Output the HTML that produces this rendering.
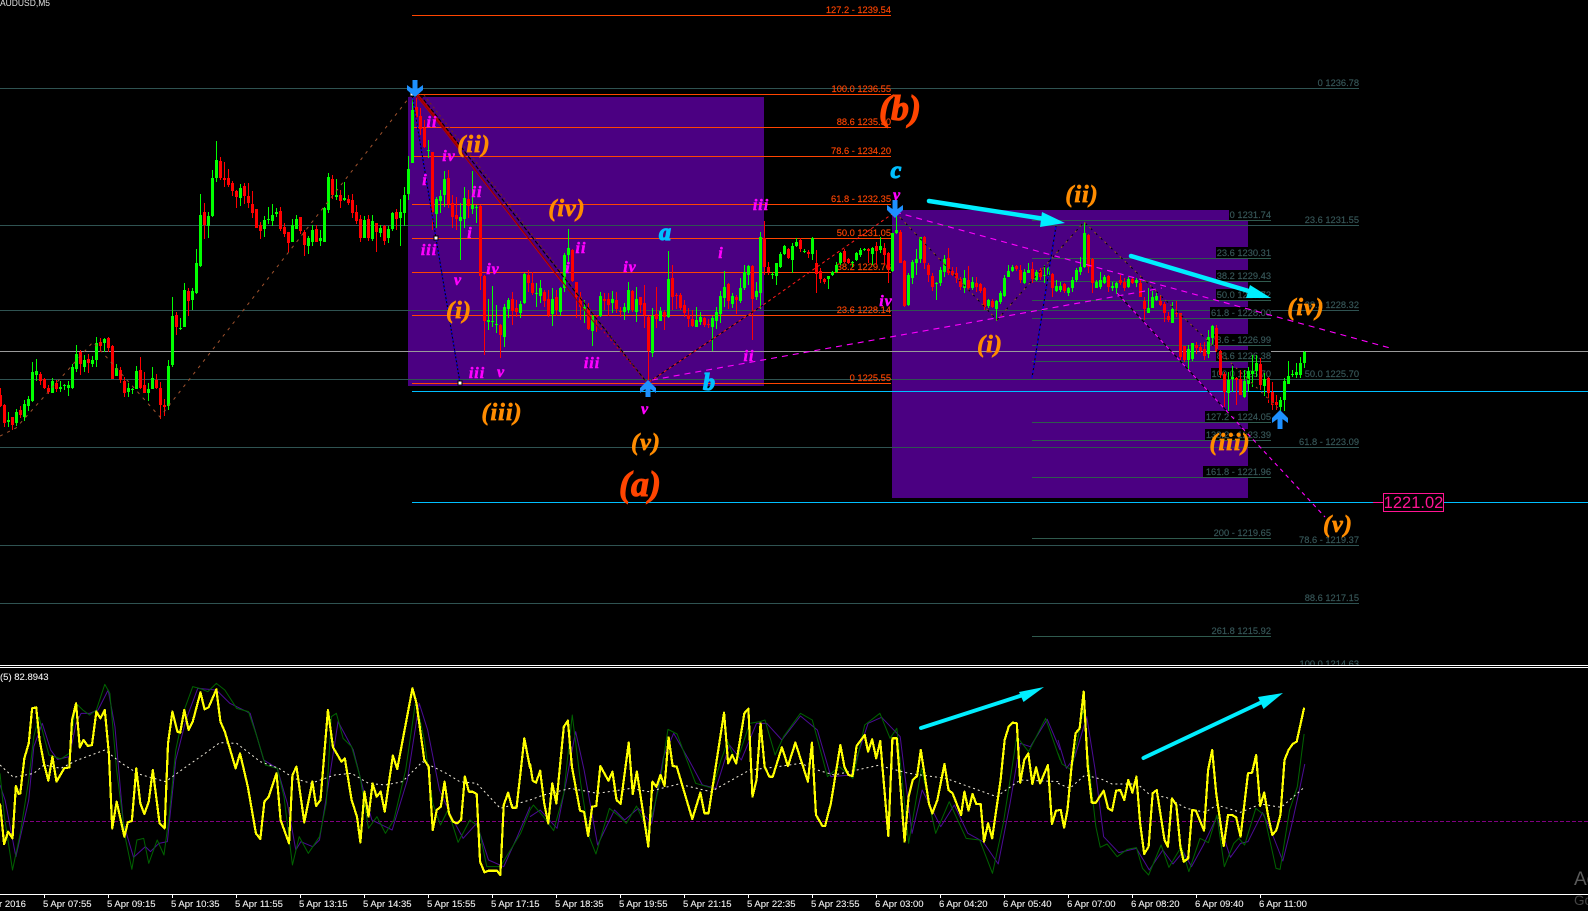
<!DOCTYPE html>
<html><head><meta charset="utf-8"><title>AUDUSD,M5</title>
<style>
html,body{margin:0;padding:0;background:#000;width:1588px;height:911px;overflow:hidden}
svg{display:block}
text{font-family:"Liberation Sans",sans-serif}
.o{fill:#ff4500;font-size:9.3px;text-anchor:end;stroke:#ff4500;stroke-width:.15px}
.s{fill:#38585a;font-size:9.3px;text-anchor:end;stroke:#38585a;stroke-width:.15px}
.t{fill:#f0f0f0;font-size:9.5px;stroke:#f0f0f0;stroke-width:.1px}
.w{font-family:"Liberation Serif",serif;font-weight:bold;font-style:italic;text-anchor:middle}
.m{fill:#ff00ff;font-size:16px;letter-spacing:1px;stroke:#ff00ff;stroke-width:.5px}
.p{fill:#ff8c00;font-size:24px;stroke:#ff8c00;stroke-width:.7px;letter-spacing:1px}
.b{fill:#ff4500;font-size:36px;stroke:#ff4500;stroke-width:1px}
.c{fill:#00bfff;font-size:24px;stroke:#00bfff;stroke-width:1.2px}
.ln{fill:none;vector-effect:non-scaling-stroke;stroke-linejoin:round}
.y{shape-rendering:crispEdges}
</style></head><body>
<svg width="1588" height="911" viewBox="0 0 1588 911" xmlns="http://www.w3.org/2000/svg">
<rect width="1588" height="911" fill="#000"/>
<rect x="408" y="97" width="356" height="289" fill="#4b0082"/>
<rect x="892" y="210" width="356" height="288" fill="#4b0082"/>

<g shape-rendering="crispEdges">
<path d="M0 88.5H1359M0 225.5H1359M0 310.5H1359M0 379.5H1359M0 447.5H1359M0 545.5H1359M0 603.5H1359" stroke="#2f5352" fill="none"/>
<path d="M0 351.5H1588" stroke="#9a9a9a" fill="none"/>
<path d="M412 391.5H1588M412 502.5H1373" stroke="#00bfff" fill="none"/>
<path d="M1444 502.5H1588" stroke="#00bfff" fill="none"/>
<path d="M412 15.5H891M412 94.5H891M412 127.5H891M412 156.5H891M412 204.5H891M412 238.5H891M412 272.5H891M412 315.5H891M412 383.5H891" stroke="#ff4500" fill="none"/>
<path d="M1032 220.5H1271M1032 258.5H1271M1032 281.5H1271M1032 300.5H1271M1032 318.5H1271M1032 345.5H1271M1032 361.5H1271M1032 379.5H1271M1032 422.5H1271M1032 440.5H1271M1032 477.5H1271M1032 538.5H1271M1032 636.5H1271" stroke="#2f5a4e" fill="none"/>
</g>

<text class="o" x="891" y="13">127.2 - 1239.54</text>
<text class="o" x="891" y="92">100.0 1236.55</text>
<text class="o" x="891" y="125">88.6 1235.30</text>
<text class="o" x="891" y="154">78.6 - 1234.20</text>
<text class="o" x="891" y="202">61.8 - 1232.35</text>
<text class="o" x="891" y="236">50.0 1231.05</text>
<text class="o" x="891" y="270">38.2 1229.76</text>
<text class="o" x="891" y="313">23.6 1228.14</text>
<text class="o" x="891" y="381">0 1225.55</text>

<g fill="#000" shape-rendering="crispEdges">
<rect x="1229" y="209" width="42" height="11"/><rect x="1216" y="247" width="55" height="11"/>
<rect x="1216" y="270" width="55" height="11"/><rect x="1216" y="289" width="55" height="11"/>
<rect x="1210" y="307" width="61" height="11"/><rect x="1214" y="334" width="57" height="11"/>
<rect x="1216" y="350" width="55" height="11"/><rect x="1211" y="368" width="60" height="11"/>
<rect x="1205" y="411" width="66" height="11"/><rect x="1205" y="429" width="66" height="11"/>
<rect x="1203" y="466" width="68" height="11"/>
</g>
<text class="s" x="1271" y="218">0 1231.74</text>
<text class="s" x="1271" y="256">23.6 1230.31</text>
<text class="s" x="1271" y="279">38.2 1229.43</text>
<text class="s" x="1271" y="298">50.0 1228.72</text>
<text class="s" x="1271" y="316">61.8 - 1228.00</text>
<text class="s" x="1271" y="343">78.6 - 1226.99</text>
<text class="s" x="1271" y="359">88.6 1226.38</text>
<text class="s" x="1271" y="377">100.0 1225.70</text>
<text class="s" x="1271" y="420">127.2 - 1224.05</text>
<text class="s" x="1271" y="438">138.2 - 1223.39</text>
<text class="s" x="1271" y="475">161.8 -  1221.96</text>
<text class="s" x="1271" y="536">200 - 1219.65</text>
<text class="s" x="1271" y="634">261.8 1215.92</text>
<text class="s" x="1359" y="86">0 1236.78</text>
<text class="s" x="1359" y="223">23.6 1231.55</text>
<text class="s" x="1359" y="308">38.2 1228.32</text>
<text class="s" x="1359" y="377">50.0 1225.70</text>
<text class="s" x="1359" y="445">61.8 - 1223.09</text>
<text class="s" x="1359" y="543">78.6 - 1219.37</text>
<text class="s" x="1359" y="601">88.6 1217.15</text>
<text class="s" x="1359" y="667">100.0 1214.63</text>

<!-- candles -->
<g transform="translate(.5,0)" fill="none" shape-rendering="crispEdges">
<path stroke="#00ff00" d="M8 412V427M16 409V426M24 400V421M28 396V411M32 362V402M36 359V381M52 378V393M60 381V392M64 384V390M68 381V396M72 364V389M76 345V372M84 355V372M92 356V367M96 337V367M104 338V352M116 364V376M128 383V397M132 388V394M136 366V389M148 383V401M152 367V389M168 360V410M172 297V367M180 318V330M184 283V327M192 288V310M196 249V294M200 194V267M208 212V238M212 170V217M216 141V182M240 184V206M264 216V237M268 207V224M272 204V226M276 208V217M292 219V242M296 215V229M308 236V254M312 225V246M320 230V246M324 207V242M328 173V213M336 179V200M344 182V201M364 216V238M372 215V241M380 225V237M388 226V243M392 212V231M400 199V246M404 187V226M408 156V200M412 94V163M428 140V158M436 197V228M440 190V213M444 171V207M460 203V260M464 187V228M472 171V214M476 205V223M488 299V330M492 286V327M496 305V333M504 304V347M508 298V318M520 301V318M524 273V304M536 283V307M540 280V303M552 288V326M560 287V316M564 253V292M568 229V262M584 300V323M592 315V346M600 292V317M612 291V313M624 303V320M628 282V313M636 287V322M652 308V357M660 307V321M668 251V318M696 307V327M700 312V325M712 316V351M716 307V329M720 291V323M724 271V307M732 293V308M740 278V303M744 265V290M748 265V285M756 282V300M760 232V309M772 272V279M776 263V285M780 252V268M784 245V255M792 243V273M796 238V247M804 249V253M812 237V260M828 276V289M832 271V276M836 262V273M840 252V265M852 261V267M856 252V261M860 248V257M864 248V251M872 247V265M880 237V253M892 233V272M896 212V234M908 273V306M912 260V284M916 249V275M920 237V263M936 282V300M940 267V286M944 255V277M964 270V293M972 277V290M988 299V308M996 300V321M1000 291V304M1004 275V297M1008 265V277M1012 265V272M1024 269V284M1028 263V273M1036 270V281M1044 265V283M1048 267V277M1056 280V292M1060 282V292M1068 287V296M1072 277V292M1076 268V282M1080 257V275M1084 222V268M1096 280V288M1100 272V289M1104 275V284M1112 282V291M1116 282V294M1128 277V288M1136 278V287M1148 288V313M1152 291V308M1156 293V301M1172 302V323M1188 345V371M1192 343V361M1208 330V358M1212 325V345M1228 372V411M1232 366V392M1244 370V398M1248 367V392M1252 355V387M1256 355V377M1264 373V396M1280 397V413M1284 378V411M1288 361V384M1292 370V377M1296 363V378M1300 357V378M1304 351V368"/>
<path stroke="#ff0000" d="M0 388V407M4 404V427M12 417V430M20 406V418M40 372V385M44 378V389M48 385V394M56 380V392M80 350V375M88 354V373M100 338V352M108 337V352M112 345V379M120 367V383M124 377V397M140 357V389M144 372V393M156 374V389M160 382V419M164 399V416M176 312V335M188 288V316M204 203V239M220 157V180M224 162V187M228 169V187M232 181V196M236 190V208M244 183V204M248 183V208M252 191V218M256 209V228M260 222V239M280 207V231M284 223V237M288 232V252M300 217V234M304 230V256M316 225V242M332 175V199M340 190V208M348 195V205M352 194V218M356 205V224M360 215V242M368 215V241M376 223V252M384 225V245M396 209V230M416 98V125M420 108V135M424 120V148M432 152V230M448 170V208M452 195V228M456 197V230M468 190V218M480 205V290M484 275V355M500 324V358M512 292V325M516 300V317M528 270V292M532 272V295M544 290V307M548 290V317M556 290V316M572 249V282M576 282V318M580 292V320M588 303V330M596 315V332M604 293V310M608 293V316M616 292V313M620 307V317M632 290V312M640 297V313M644 285V328M648 316V380M656 287V328M664 310V330M672 265V310M676 293V309M680 293V310M684 300V317M688 308V327M692 310V327M704 317V327M708 319V328M728 283V309M736 295V314M752 265V340M764 221V275M768 262V275M788 248V259M800 238V252M808 250V258M816 250V293M820 268V283M824 278V284M844 249V263M848 258V264M868 248V263M876 242V265M884 243V265M888 252V283M900 230V263M904 260V307M924 236V269M928 263V282M932 273V291M948 248V275M952 267V276M956 267V283M960 277V290M968 266V291M976 277V292M980 283V293M984 287V310M992 299V308M1016 265V271M1020 265V283M1032 262V283M1040 268V280M1052 273V297M1064 283V293M1088 234V273M1092 258V293M1108 275V292M1120 275V285M1124 278V291M1132 277V284M1140 279V297M1144 297V320M1160 296V306M1164 302V322M1168 312V322M1176 301V317M1180 313V360M1184 346V362M1196 342V354M1200 343V353M1204 342V360M1216 325V352M1220 350V378M1224 372V407M1236 377V405M1240 370V393M1260 358V390M1268 377V403M1272 382V410M1276 395V410"/>
<path id="gb" stroke="#00ff00" stroke-width="3" d="M8 420V422M16 412V423M24 404V417M28 399V406M32 372V401M36 371V375M52 381V393M60 387V389M64 385V386M68 385V388M72 367V388M76 354V369M84 360V367M92 360V364M96 343V360M104 339V343M116 368V376M128 388V392M132 389V390M136 371V389M148 389V393M152 378V389M168 366V406M172 316V365M180 328V329M184 290V327M192 291V300M196 263V293M200 215V266M208 216V226M212 178V216M216 160V178M240 188V198M264 220V229M268 219V220M272 215V221M276 212V214M292 225V242M296 219V229M308 238V246M312 230V242M320 238V241M324 208V242M328 177V210M336 195V197M344 198V200M364 220V238M372 221V239M380 228V233M388 229V238M392 213V229M400 212V218M404 195V213M408 169V194M412 110V163M428 150V151M436 199V214M440 196V201M444 179V195M460 217V221M464 198V219M472 205V209M476 207V208M488 320V322M492 321V322M496 324V325M504 307V337M508 300V309M520 304V313M524 274V303M536 293V294M540 288V296M552 299V314M560 288V312M564 255V288M568 248V255M584 307V310M592 316V331M600 296V316M612 299V303M624 307V312M628 290V310M636 299V312M652 316V353M660 311V321M668 279V317M696 320V327M700 317V322M712 318V327M716 312V321M720 296V314M724 287V298M732 296V304M740 288V301M744 272V288M748 266V275M756 291V297M760 237V293M772 274V275M776 263V276M780 254V267M784 246V254M792 246V260M796 242V246M804 251V252M812 238V254M828 276V279M832 272V275M836 265V272M840 253V263M852 262V263M856 253V260M860 250V255M864 249V250M872 248V254M880 246V250M892 233V271M896 230V233M908 275V305M912 262V278M916 259V263M920 237V259M936 283V284M940 270V283M944 259V272M964 278V288M972 282V288M988 300V306M996 301V309M1000 293V302M1004 278V296M1008 271V277M1012 267V271M1024 272V283M1028 270V273M1036 272V280M1044 275V276M1048 268V275M1056 286V291M1060 286V290M1068 288V293M1072 280V288M1076 270V280M1080 267V272M1084 233V267M1096 282V288M1100 280V287M1104 277V283M1112 286V288M1116 283V288M1128 279V287M1136 280V283M1148 308V313M1152 297V308M1156 296V300M1172 309V323M1188 349V360M1192 343V359M1208 337V354M1212 326V338M1228 380V393M1232 377V379M1244 381V397M1248 371V384M1252 371V374M1256 363V371M1264 379V386M1280 400V407M1284 381V400M1288 376V384M1292 374V375M1296 372V375M1300 363V375M1304 352V363"/>
<path id="rb" stroke="#ff0000" stroke-width="3" d="M0 395V406M4 405V423M12 417V425M20 410V415M40 374V381M44 379V388M48 388V392M56 383V389M80 352V364M88 359V363M100 342V346M108 338V348M112 346V379M120 370V380M124 381V393M140 370V388M144 385V393M156 380V388M160 388V405M164 405V407M176 315V327M188 291V301M204 212V225M220 161V178M224 178V180M228 178V185M232 183V191M236 191V197M244 186V196M248 196V203M252 204V213M256 209V228M260 225V231M280 211V229M284 227V234M288 232V243M300 217V231M304 232V245M316 229V242M332 179V195M340 195V201M348 199V203M352 200V213M356 212V221M360 219V238M368 219V238M376 223V232M384 226V241M396 212V219M416 107V117M420 116V129M424 128V147M432 152V212M448 178V204M452 203V217M456 215V219M468 199V206M480 206V276M484 276V321M500 325V335M512 299V311M516 308V312M528 275V283M532 283V293M544 292V301M548 299V315M556 297V310M572 250V281M576 282V297M580 297V307M588 308V329M596 316V317M604 299V301M608 299V305M616 300V309M620 311V312M632 291V310M640 297V305M644 303V315M648 317V351M656 314V319M664 312V317M672 278V297M676 295V296M680 295V308M684 305V313M688 315V319M692 319V326M704 318V325M708 324V325M728 284V301M736 297V300M752 266V299M764 238V267M768 267V272M788 249V258M800 240V249M808 252V254M816 263V274M820 271V279M824 279V282M844 251V262M848 259V263M868 249V251M876 246V251M884 248V255M888 253V269M900 232V263M904 261V306M924 237V263M928 265V275M932 276V287M948 258V273M952 271V275M956 273V278M960 279V287M968 280V288M976 283V287M980 284V291M984 288V307M992 301V307M1016 266V269M1020 270V280M1032 269V279M1040 270V277M1052 274V288M1064 284V291M1088 235V267M1092 259V283M1108 276V287M1120 280V283M1124 282V288M1132 279V283M1140 283V297M1144 301V309M1160 301V305M1164 304V313M1168 316V320M1176 313V314M1180 313V357M1184 346V360M1196 345V348M1200 347V351M1204 349V356M1216 328V351M1220 351V375M1224 374V392M1236 378V380M1240 379V395M1260 364V385M1268 378V393M1272 392V405M1276 402V405"/>
<use href="#rb" style="stroke:#d96a6a;stroke-width:1"/>
<use href="#gb" style="stroke:#62c83c;stroke-width:1"/>
</g>

<!-- trend lines -->
<g fill="none">
<polyline points="0,436 16,428 93,342 160,417 412,94" stroke="#a0522d" stroke-dasharray="3 5"/>
<path d="M417 95L462 150" stroke="#b00000" stroke-width="3"/>
<path d="M417 95L562 282" stroke="#e00000" stroke-width="1.3"/>
<path d="M562 282L648 384" stroke="#e00000" stroke-dasharray="2 3"/>
<path d="M417 95L600 330" stroke="#8b0000"/>
<path d="M420 95L648 384" stroke="#000" stroke-width="1.1" stroke-dasharray="4 2"/>
<path d="M424 95L648 384" stroke="#7a2b10" stroke-dasharray="2 3"/>
<path d="M649 382L763 305" stroke="#000"/>
<path d="M649 382L763 305L895 212" stroke="#ff1a1a" stroke-dasharray="3 3"/>
<path d="M412 94L436 238L460 383" stroke="#000"/>
<path d="M412 94L436 238L460 383" stroke="#0000ff" stroke-dasharray="2 2"/>
<path d="M1032 378L1056 226" stroke="#000"/>
<path d="M1032 378L1056 226" stroke="#0000ff" stroke-dasharray="3 2"/>
<path d="M652 380L1162 288" stroke="#ff00ff" stroke-dasharray="6 5" stroke-width="1.1"/>
<path d="M895 212L1390 348" stroke="#ff00ff" stroke-dasharray="6 5" stroke-width="1.1"/>
<path d="M1117 293L1248 434" stroke="#000" stroke-width="1.1"/>
<path d="M1117 293L1325 517" stroke="#ff00ff" stroke-dasharray="4 4" stroke-width="1.1"/>
<polyline points="895,212 997,320 1084,222 1280,410" stroke="#000" stroke-dasharray="4 3"/>
<polyline points="895,212 997,320 1084,222 1280,410" stroke="#a0522d" stroke-dasharray="2 5"/>
</g>
<g shape-rendering="crispEdges">
<rect x="410" y="92" width="4" height="4" fill="#fff" stroke="#000"/>
<rect x="434" y="236" width="4" height="4" fill="#fff" stroke="#000"/>
<rect x="458" y="381" width="4" height="4" fill="#fff" stroke="#000"/>
</g>

<!-- blue arrows -->
<g fill="#1e90ff">
<polygon points="412.5,80 417.5,80 417.5,89 423,85 423,90 415,97 407,90 407,85 412.5,89"/>
<polygon points="892.5,200 897.5,200 897.5,209 903,205 903,210 895,218 887,210 887,205 892.5,209"/>
<polygon points="648,380 656,388 656,393 650.5,389 650.5,397 645.5,397 645.5,389 640,393 640,388"/>
<polygon points="1280,410 1288,418 1288,423 1282.5,419 1282.5,429 1277.5,429 1277.5,419 1272,423 1272,418"/>
</g>

<!-- cyan arrows -->
<g fill="#00eeff">
<path d="M929 201L1045 219" stroke="#00eeff" stroke-width="4.5" stroke-linecap="round"/>
<polygon points="1042,212 1065,223 1040,227"/>
<path d="M1131 256L1252 292" stroke="#00eeff" stroke-width="4.5" stroke-linecap="round"/>
<polygon points="1250,285 1271,298 1246,298"/>
</g>

<!-- wave labels -->
<text class="w b" x="900" y="120">(b)</text>
<text class="w b" x="640" y="496">(a)</text>
<text class="w p" x="474" y="152">(ii)</text>
<text class="w p" x="567" y="216">(iv)</text>
<text class="w p" x="459" y="318">(i)</text>
<text class="w p" x="502" y="420">(iii)</text>
<text class="w p" x="646" y="450">(v)</text>
<text class="w p" x="1082" y="202">(ii)</text>
<text class="w p" x="990" y="352">(i)</text>
<text class="w p" x="1230" y="450">(iii)</text>
<text class="w p" x="1306" y="315">(iv)</text>
<text class="w p" x="1338" y="532">(v)</text>
<text class="w m" x="432" y="127">ii</text>
<text class="w m" x="449" y="161">iv</text>
<text class="w m" x="425" y="185">i</text>
<text class="w m" x="429" y="255">iii</text>
<text class="w m" x="458" y="285">v</text>
<text class="w m" x="477" y="197">ii</text>
<text class="w m" x="470" y="238">i</text>
<text class="w m" x="493" y="274">iv</text>
<text class="w m" x="477" y="378">iii</text>
<text class="w m" x="501" y="377">v</text>
<text class="w m" x="581" y="253">ii</text>
<text class="w m" x="568" y="273">i</text>
<text class="w m" x="630" y="272">iv</text>
<text class="w m" x="592" y="368">iii</text>
<text class="w m" x="645" y="414">v</text>
<text class="w m" x="721" y="258">i</text>
<text class="w m" x="749" y="361">ii</text>
<text class="w m" x="761" y="210">iii</text>
<text class="w m" x="886" y="306">iv</text>
<text class="w m" x="897" y="200">v</text>
<text class="w c" x="665" y="240">a</text>
<text class="w c" x="709" y="390">b</text>
<text class="w c" x="896" y="178">c</text>

<!-- price tag -->
<path d="M1373 502.5H1383" stroke="#ff1493" shape-rendering="crispEdges"/>
<rect x="1383.5" y="493.5" width="60" height="18" fill="#000" stroke="#ff1493" shape-rendering="crispEdges"/>
<text x="1413.5" y="508" fill="#ff1493" font-size="16.5" text-anchor="middle">1221.02</text>

<text x="0" y="6" fill="#e0e0e0" font-size="9.5" textLength="50" lengthAdjust="spacingAndGlyphs">AUDUSD,M5</text>

<!-- indicator window -->
<rect x="0" y="665" width="1588" height="246" fill="#000"/>
<g shape-rendering="crispEdges">
<path d="M0 665.5H1588M0 667.5H1588" stroke="#fff"/>
<path d="M0 821.5H1588" stroke="#800080" stroke-dasharray="4 2"/>
</g>
<text class="t" x="0" y="680">(5) 82.8943</text>

<g transform="translate(0,660) scale(.33807,.33333)">
<polyline class="ln" stroke="#4b0c96" points="0,375 15,420 47,590 85,420 100,260 125,190 150,270 170,298 205,290 225,190 240,160 265,160 290,150 320,90 340,200 365,490 395,592 430,560 445,575 470,550 495,545 520,300 550,180 585,85 640,90 680,130 740,160 780,300 820,325 850,430 875,570 890,545 925,560 945,540 975,350 1000,185 1045,270 1075,390 1100,480 1160,510 1205,360 1240,130 1265,210 1300,390 1335,470 1370,535 1410,490 1445,600 1490,620 1530,530 1568,440"/>
<polyline class="ln" stroke="#006400" points="0,340 13,470 37,630 60,520 85,360 100,230 115,170 130,230 145,285 180,297 205,280 225,130 245,150 265,165 285,150 310,73 325,100 345,330 370,530 390,628 405,540 425,535 440,610 465,540 485,585 500,470 520,270 545,150 570,80 590,85 615,95 640,70 665,90 700,145 735,155 760,230 785,315 820,325 840,410 865,615 885,530 912,580 945,530 965,430 980,170 995,160 1015,235 1040,260 1065,350 1090,505 1115,470 1140,520 1165,480 1200,330 1230,120 1255,240 1280,430 1303,495 1325,450 1355,547 1390,480 1415,500 1440,620 1480,620 1510,570 1540,520 1568,450"/>
<polyline class="ln" stroke="#f5f0e0" stroke-dasharray="2 3" points="0,315 40,352 100,340 130,315 180,325 225,302 310,270 360,310 410,342 490,365 530,335 600,285 650,248 700,250 770,305 825,325 870,355 920,370 990,345 1040,340 1090,370 1140,375 1190,365 1250,305 1320,340 1360,365 1410,370 1480,445 1568,420"/>
<polyline class="ln y" stroke="#ffff00" stroke-width="2.2" points="0,430 8,510 12,552 24,515 37,535 47,378 55,402 60,400 72,295 85,250 95,145 107,142 117,240 130,310 143,362 155,290 167,365 190,325 205,322 213,180 225,130 236,262 247,240 260,258 272,255 285,155 297,175 310,150 322,280 332,505 345,425 368,530 378,487 390,483 403,325 415,430 427,462 440,425 452,330 472,490 487,505 497,250 510,155 525,215 533,218 545,150 558,210 570,185 593,97 605,148 617,142 640,88 652,185 665,215 697,325 710,280 733,380 757,520 770,537 782,425 795,410 818,340 830,480 855,550 865,345 877,320 900,487 924,365 935,438 948,420 970,150 985,262 1010,305 1020,295 1040,420 1056,470 1066,547 1078,395 1090,470 1102,370 1114,410 1126,395 1138,455 1162,287 1175,327 1220,85 1232,130 1255,300 1268,320 1280,510 1292,450 1304,440 1315,365 1328,460 1340,485 1352,490 1364,480 1375,350 1387,395 1398,395 1410,402 1420,605 1433,637 1445,632 1470,632 1480,645 1490,435 1503,398 1515,443 1528,443 1551,235 1568,325"/>
</g>
<g transform="translate(530,660) scale(.33807,.33333)">
<polyline class="ln" stroke="#4b0c96" points="0,470 30,450 80,505 110,350 135,215 160,330 200,555 250,450 280,480 320,445 360,490 395,290 425,220 470,300 510,375 550,385 590,255 625,300 670,190 700,190 745,240 800,168 850,210 890,350 950,345 1000,190 1040,172 1095,230 1130,520 1160,390 1215,500 1255,435 1295,520 1340,545 1385,612 1420,430 1450,250 1480,260 1530,178 1568,270"/>
<polyline class="ln" stroke="#006400" points="0,450 10,435 40,470 70,512 100,400 125,165 150,370 175,530 195,582 235,445 265,470 285,490 315,438 350,515 385,365 408,208 435,222 490,370 540,385 565,300 585,245 610,310 650,190 680,185 695,180 725,285 750,230 800,160 835,180 880,350 915,320 955,355 990,195 1035,160 1065,235 1085,205 1120,550 1158,325 1200,520 1240,425 1290,535 1330,540 1368,640 1400,490 1440,230 1475,275 1525,175 1568,300"/>
<polyline class="ln" stroke="#f5f0e0" stroke-dasharray="2 3" points="0,420 40,405 120,385 200,400 300,385 350,395 440,372 535,395 650,330 720,322 800,310 850,330 900,345 1030,316 1120,340 1230,355 1380,410 1450,360 1568,365"/>
<polyline class="ln y" stroke="#ffff00" stroke-width="2.2" points="0,310 8,362 18,368 30,332 42,430 54,490 66,370 78,430 100,200 112,182 124,320 148,452 160,456 172,528 184,440 196,438 208,318 232,362 244,335 256,420 268,432 292,248 304,402 316,335 350,560 362,365 374,380 386,345 398,378 410,232 422,318 434,320 480,477 504,398 516,460 528,460 574,158 586,310 598,285 610,310 634,160 646,146 658,410 670,360 682,190 694,320 708,350 718,350 745,262 763,318 785,248 822,365 834,248 846,465 865,498 873,498 890,430 918,255 930,320 942,345 954,348 966,258 990,225 1000,275 1012,238 1024,295 1036,243 1060,528 1072,235 1085,235 1108,545 1120,410 1132,360 1145,348 1156,270 1180,430 1190,460 1205,420 1226,312 1238,390 1250,400 1275,465 1285,395 1297,452 1309,402 1320,432 1333,432 1343,545 1355,490 1367,535 1392,360 1404,240 1416,200 1428,188 1440,190 1450,368 1462,300 1474,280 1486,372 1497,322 1509,370 1532,315 1544,492 1556,452 1568,450"/>
</g>
<g transform="translate(1058,660) scale(.33807,.33333)">
<polyline class="ln" stroke="#4b0c96" points="0,240 25,325 50,290 85,170 110,330 135,530 180,578 232,565 270,630 310,570 340,612 370,575 395,620 430,555 470,470 510,592 540,550 562,545 605,458 635,525 665,603 690,500 712,400 730,312"/>
<polyline class="ln" stroke="#006400" points="0,280 12,312 40,330 75,150 95,350 112,500 125,562 145,552 175,590 205,568 232,563 250,625 268,645 305,555 328,622 365,560 387,635 420,535 445,548 470,465 492,620 520,550 535,535 552,555 585,445 610,465 645,625 657,628 685,450 708,380 728,222"/>
<polyline class="ln" stroke="#f5f0e0" stroke-dasharray="2 3" points="0,370 35,385 80,345 130,358 160,372 235,372 270,403 320,412 380,445 435,457 470,435 540,457 600,432 660,442 725,385"/>
<polyline class="ln y" stroke="#ffff00" stroke-width="2.2" points="0,450 8,450 18,503 28,450 40,320 52,220 64,205 76,95 88,320 100,428 112,428 135,392 148,445 160,452 172,392 184,390 196,420 208,360 220,398 232,350 243,490 255,582 268,560 280,400 292,390 315,540 325,560 337,415 350,435 362,560 372,605 385,595 397,450 408,452 432,512 444,330 456,270 468,400 490,558 503,465 515,465 527,472 540,530 562,340 574,338 586,285 598,438 610,398 622,470 634,525 646,510 658,465 670,300 682,270 694,252 706,245 728,143"/>
</g>

<!-- arrows over indicator -->
<g fill="#00eeff">
<path d="M921 728L1023 695" stroke="#00eeff" stroke-width="4" stroke-linecap="round"/>
<polygon points="1019,692 1044,687 1023.5,702"/>
<path d="M1143.5 758L1262 702" stroke="#00eeff" stroke-width="4" stroke-linecap="round"/>
<polygon points="1258,697 1283,693 1263.5,709"/>
</g>

<!-- time axis -->
<g shape-rendering="crispEdges">
<path d="M0 894.5H1588" stroke="#fff"/>
<path d="M44.5 894V898M108.5 894V898M172.5 894V898M236.5 894V898M300.5 894V898M364.5 894V898M428.5 894V898M492.5 894V898M556.5 894V898M620.5 894V898M684.5 894V898M748.5 894V898M812.5 894V898M876.5 894V898M940.5 894V898M1004.5 894V898M1068.5 894V898M1132.5 894V898M1196.5 894V898M1260.5 894V898" stroke="#fff"/>
</g>
<text class="t" x="-20" y="907">5 Apr 2016</text>
<text class="t" x="43" y="907">5 Apr 07:55</text>
<text class="t" x="107" y="907">5 Apr 09:15</text>
<text class="t" x="171" y="907">5 Apr 10:35</text>
<text class="t" x="235" y="907">5 Apr 11:55</text>
<text class="t" x="299" y="907">5 Apr 13:15</text>
<text class="t" x="363" y="907">5 Apr 14:35</text>
<text class="t" x="427" y="907">5 Apr 15:55</text>
<text class="t" x="491" y="907">5 Apr 17:15</text>
<text class="t" x="555" y="907">5 Apr 18:35</text>
<text class="t" x="619" y="907">5 Apr 19:55</text>
<text class="t" x="683" y="907">5 Apr 21:15</text>
<text class="t" x="747" y="907">5 Apr 22:35</text>
<text class="t" x="811" y="907">5 Apr 23:55</text>
<text class="t" x="875" y="907">6 Apr 03:00</text>
<text class="t" x="939" y="907">6 Apr 04:20</text>
<text class="t" x="1003" y="907">6 Apr 05:40</text>
<text class="t" x="1067" y="907">6 Apr 07:00</text>
<text class="t" x="1131" y="907">6 Apr 08:20</text>
<text class="t" x="1195" y="907">6 Apr 09:40</text>
<text class="t" x="1259" y="907">6 Apr 11:00</text>

<text x="1574" y="885" fill="#5a5a5a" font-size="19">Activate Windows</text>
<text x="1574" y="905" fill="#444" font-size="13.5">Go to Settings</text>
</svg>
</body></html>
